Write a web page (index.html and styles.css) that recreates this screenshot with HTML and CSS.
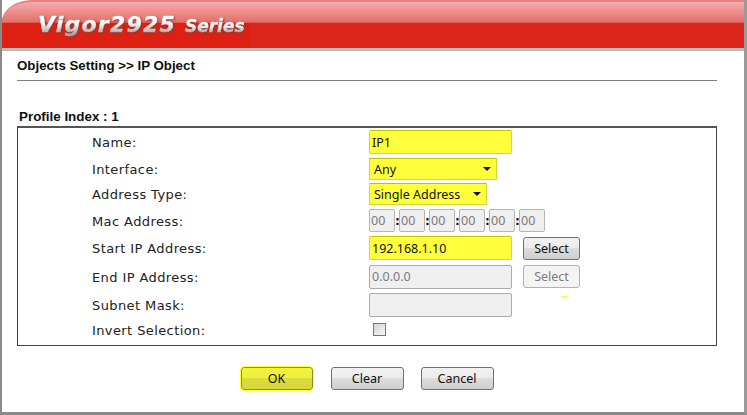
FILE: index.html
```html
<!DOCTYPE html>
<html lang="en">
<head>
    <meta charset="UTF-8">
    <title>Vigor2925 Series - IP Object</title>
    <link rel="stylesheet" href="styles.css">
</head>
<body>
    <div class="window">
        <div class="banner">
            <span class="model">Vigor2925</span>
            <span class="series">Series</span>
        </div>

        <div class="content">
            <h1 class="crumb">Objects Setting &gt;&gt; IP Object</h1>
            <h2 class="profile">Profile Index : 1</h2>

            <div class="box">
                <label class="name">Name:</label>
                <div class="field"><input class="text hl" type="text" value="IP1"></div>

                <label class="name">Interface:</label>
                <div class="field"><div class="select hl sel-any">Any<span class="arrow"></span></div></div>

                <label class="name">Address Type:</label>
                <div class="field"><div class="select hl sel-type">Single Address<span class="arrow"></span></div></div>

                <label class="name">Mac Address:</label>
                <div class="field mac">
                    <input class="octet" type="text" value="00" disabled><b>:</b>
                    <input class="octet" type="text" value="00" disabled><b>:</b>
                    <input class="octet" type="text" value="00" disabled><b>:</b>
                    <input class="octet" type="text" value="00" disabled><b>:</b>
                    <input class="octet" type="text" value="00" disabled><b>:</b>
                    <input class="octet" type="text" value="00" disabled>
                </div>

                <label class="name">Start IP Address:</label>
                <div class="field">
                    <input class="text hl" type="text" value="192.168.1.10">
                    <button class="btn pick">Select</button>
                </div>

                <label class="name">End IP Address:</label>
                <div class="field">
                    <input class="text" type="text" value="0.0.0.0" disabled>
                    <button class="btn pick" disabled>Select</button>
                </div>

                <label class="name">Subnet Mask:</label>
                <div class="field">
                    <input class="text" type="text" disabled>
                    <span class="speck"></span>
                </div>

                <label class="name">Invert Selection:</label>
                <div class="field"><span class="check"></span></div>
            </div>

            <div class="actions">
                <button class="btn wide ok">OK</button>
                <button class="btn wide">Clear</button>
                <button class="btn wide">Cancel</button>
            </div>
        </div>
    </div>
</body>
</html>
```

FILE: styles.css
```css
html, body {
    margin: 0;
    padding: 0;
}
body {
    width: 747px;
    height: 415px;
    overflow: hidden;
    background: #fff;
    font-family: "DejaVu Sans", sans-serif;
    color: #111;
}
.window {
    box-sizing: border-box;
    width: 747px;
    height: 415px;
    border-left: 2px solid #8a8a8a;
    border-right: 3px solid #9a9a9a;
    border-bottom: 3px solid #8a8a8a;
    background: #fff;
}

/* red banner */
.banner {
    box-sizing: border-box;
    height: 51px;
    padding: 10px 0 0 36px;
    border-top: 2px solid #e98080;
    border-bottom: 3px solid #bdb9b7;
    border-top-left-radius: 30px 22px;
    background:
        linear-gradient(180deg, #f3aeac 0%, #e5716c 42%, #dc5a54 45%, transparent 46%),
        linear-gradient(90deg, #dd2012 248px, #da261d 250px);
    display: flex;
    align-items: baseline;
    gap: 9px;
}
.model, .series {
    font-family: "DejaVu Sans", sans-serif;
    font-weight: bold;
    font-style: italic;
    background: linear-gradient(180deg, #ffffff 25%, #f0f0f0 50%, #a9a9a9 85%);
    -webkit-background-clip: text;
    background-clip: text;
    color: transparent;
    -webkit-text-stroke: 0.5px transparent;
    filter: drop-shadow(1px 1px 1px #8c3a34);
}
.model {
    font-size: 22px;
    letter-spacing: 1.2px;
}
.series {
    font-size: 17px;
}

.content {
    padding: 0 27px 0 15px;
}
.crumb {
    box-sizing: content-box;
    height: 22px;
    margin: 0;
    padding-top: 7px;
    border-bottom: 1px solid #808080;
    font-family: "Liberation Sans", sans-serif;
    font-size: 13.3px;
    line-height: 15px;
    font-weight: bold;
}
.profile {
    margin: 28px 0 0 2px;
    font-family: "Liberation Sans", sans-serif;
    font-size: 13.4px;
    line-height: 15px;
    font-weight: bold;
}

/* form table */
.box {
    box-sizing: border-box;
    height: 220px;
    margin-top: 2px;
    border: 1px solid #444;
    border-top: 2px solid #555;
    padding-top: 1px;
    display: grid;
    grid-template-columns: 351px 1fr;
    grid-template-rows: 26px 27px 24px 29px 26px 31px 25px 25px;
    align-items: center;
}
.name {
    padding: 2px 0 0 74px;
    font-size: 13px;
    line-height: 16px;
    letter-spacing: 0.4px;
    color: #222;
}
.field {
    display: flex;
    align-items: center;
}
.text {
    box-sizing: border-box;
    width: 143px;
    height: 24px;
    margin: 0;
    padding: 0 2px;
    border: 1px solid #ababab;
    border-radius: 2px;
    background: #efefef;
    font-family: "Noto Sans", sans-serif;
    font-size: 12.5px;
    color: #7b7b7b;
    outline: none;
}
.hl {
    border-color: #d6d63a;
    border-top-color: #c2c200;
    background: #ffff3c;
    color: #111;
}
.select {
    box-sizing: border-box;
    height: 22px;
    padding-left: 4px;
    border: 1px solid #d6d63a;
    border-top-color: #c2c200;
    font-family: "Noto Sans", sans-serif;
    font-size: 12.5px;
    line-height: 21px;
    color: #111;
    position: relative;
}
.sel-any {
    width: 128px;
}
.sel-type {
    width: 118px;
}
.arrow {
    position: absolute;
    right: 5px;
    top: 8px;
    border-left: 4px solid transparent;
    border-right: 4px solid transparent;
    border-top: 4px solid #111;
}
.mac b {
    width: 4px;
    font-size: 12px;
    line-height: 22px;
    text-align: center;
    font-weight: bold;
}
.octet {
    box-sizing: border-box;
    width: 26px;
    height: 23px;
    margin: 0;
    padding: 0 1px;
    border: 1px solid #b5b5b5;
    border-radius: 2px;
    background: #efefef;
    font-family: "Noto Sans", sans-serif;
    font-size: 12.5px;
    color: #7a7a7a;
}
.btn {
    box-sizing: border-box;
    margin: 0;
    padding: 0;
    border: 1px solid #707070;
    border-radius: 3px;
    background: linear-gradient(180deg, #f2f2f2 0%, #ebebeb 48%, #dcdcdc 50%, #cfcfcf 100%);
    font-family: "Noto Sans", sans-serif;
    font-size: 12.5px;
    color: #111;
}
.btn:disabled {
    border-color: #adb2b5;
    background: #f4f4f4;
    color: #7c7c7c;
}
.pick {
    width: 57px;
    height: 23px;
    margin-left: 11px;
}
.speck {
    width: 6px;
    height: 2px;
    margin: -15px 0 0 49px;
    background: #ffff3c;
}
.check {
    box-sizing: border-box;
    width: 13px;
    height: 13px;
    margin-left: 4px;
    border: 1px solid #777;
    background: linear-gradient(135deg, #d4d4d8, #f6f6f6);
}

/* bottom buttons */
.actions {
    display: flex;
    justify-content: center;
    gap: 17px;
    margin-top: 21px;
}
.wide {
    width: 73px;
    height: 23px;
}
.ok {
    width: 72px;
    margin-right: 1px;
    border-color: #8d8d1e;
    outline: 1px solid #ffff3c;
    background: linear-gradient(180deg, #f4f43c 0%, #efef3e 48%, #dcdc3c 50%, #d6d63e 100%);
}
```
